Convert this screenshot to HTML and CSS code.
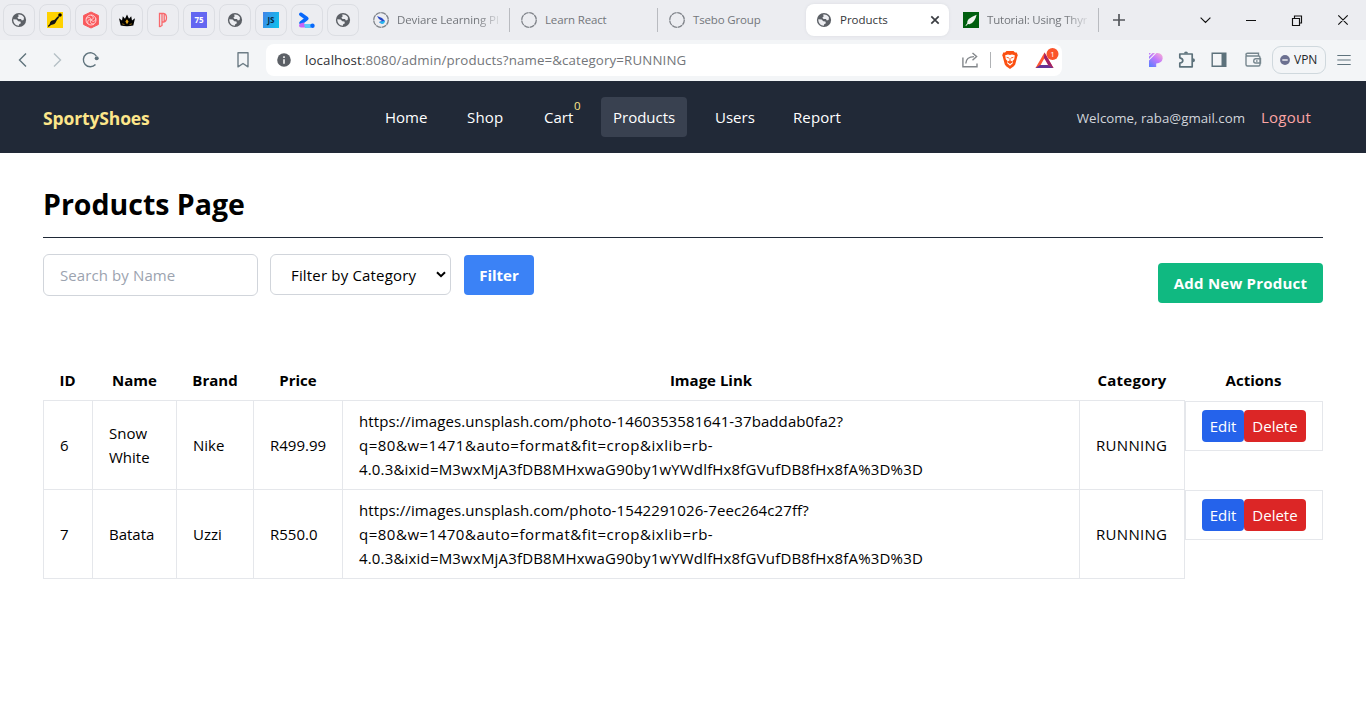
FILE: index.html
```html
<!DOCTYPE html>
<html lang="en">
<head>
<meta charset="utf-8">
<title>Products</title>
<link rel="stylesheet" href="styles.css">
</head>
<body>
<svg class="defs" aria-hidden="true">
  <symbol id="globe" viewBox="0 0 16 16"><circle cx="8" cy="8" r="7.1" fill="#5c6066"/><path d="M7.2 2.6C9.5 2.2 12 3.3 13 5.6L12.6 7.9 10.8 8.4 10 7H7.6L6.3 5.7 7.6 4.6ZM2.3 7.3 5.6 7.6 7.3 9.2 9.4 9.6 9.9 11.2 8.2 12.2 7.8 13.7C4.8 13.7 2.2 11.2 2.3 7.3Z" fill="#ecedf1"/></symbol>
  <symbol id="spinner" viewBox="0 0 16 16"><circle cx="8" cy="8" r="7.3" fill="none" stroke="#7d8187" stroke-width="1.3" stroke-dasharray="5.100 .630"/></symbol>
</svg>
<div class="browser">
  <div class="tabstrip">
    <div class="pins">
      <div class="pin"><svg width="16" height="16"><use href="#globe"/></svg></div>
      <div class="pin"><svg width="16" height="16"><path fill="#ffd200" d="M0 0h16v16H0z"/><path d="M1.200 15 1 13.800 2.600 12.200C3 9.500 4.500 8.600 6.200 8.300 8.700 7.800 9 5.500 11.300 4L12.300 5C10.800 7.300 9.800 7.800 9.200 9.500 8.600 11.500 6.800 12.800 4 12.900L2.200 14.600Z" fill="#151515"/><circle cx="13" cy="3" r="1.800"/></svg></div>
      <div class="pin"><svg width="16" height="16"><path d="M8 0 15.4 3.5V12.5L8 16 .6 12.5V3.5Z" fill="#f9595c" stroke="#f9595c" stroke-linejoin="round"/><g fill="none" stroke="#ffdadb" stroke-width=".9"><circle cx="8" cy="8" r="5"/><path d="M8 3C11 5 11 7 8 8M12.8 6.5C12 10 10 10 8 8M11 12C7.5 12 6.8 10 8 8M5 12C4 8.500 5.500 7 8 8M3.200 6.500C6.500 4.500 8 6 8 8"/></g></svg></div>
      <div class="pin"><svg width="16" height="16"><path d="M0 6.200 3 8.500 3.800 4.200 6 6.800 8 2.500 10 6.800 12.200 4.200 13 8.500 16 6.200 14.300 13.600Q8 15 1.700 13.600Z"/><path d="M8 7.200 9.600 9.600 8 12.300 6.400 9.600Z" fill="#e3a41b"/><path d="M3.200 11.800 5.500 12.600M12.800 11.800 10.500 12.600" stroke="#b37e14" stroke-width=".8"/></svg></div>
      <div class="pin"><svg width="16" height="16" fill="none" stroke="#f8696d" stroke-width="1.300"><path d="M4.500 15V1.500H8.500C12.500 2 12.500 9.500 8.500 10H7M7 1v12.500L4.500 15M9.200 2v8"/></svg></div>
      <div class="pin"><span class="score">75</span></div>
      <div class="pin"><svg width="16" height="16"><use href="#globe"/></svg></div>
      <div class="pin"><span class="js">JS</span></div>
      <div class="pin"><svg width="16" height="16"><path d="M1.800 2.300 7.800 6.500 2 11" fill="none" stroke="#0868fb" stroke-width="3.600" stroke-linecap="round" stroke-linejoin="round"/><path d="M0 13.800Q0 11 5 10.500L7 15.500H2Q0 15.500 0 13.800Z" fill="#c863f5"/><path d="M5 12H12V16H6Z" fill="#5cc9fb"/><circle cx="13.500" cy="13.700" r="2.200" fill="#0868fb"/></svg></div>
      <div class="pin"><svg width="16" height="16"><use href="#globe"/></svg></div>
    </div>
    <div class="tab deviare"><svg width="16" height="16"><use href="#spinner"/><path d="M4 4 9 6 12 9 10 11.500Q8 12 6 10L9 9Q5 7 4 4Z" fill="#2847c5"/><path d="M6 10 12 8.700Q11.500 12 9 12Z" fill="#27b9ef"/></svg><span>Deviare Learning Pl</span></div>
    <div class="tab learn"><svg width="16" height="16"><use href="#spinner"/></svg><span>Learn React</span></div>
    <div class="tab tsebo"><svg width="16" height="16"><use href="#spinner"/></svg><span>Tsebo Group</span></div>
    <div class="tab active"><svg width="16" height="16"><use href="#globe"/></svg><span>Products</span><svg width="10" height="10" class="close"><path d="M1.300 1.300 8.700 8.700M8.700 1.300 1.300 8.700" stroke="#3a3d42" stroke-width="1.700"/></svg></div>
    <div class="tab tutorial"><svg width="16" height="16"><path fill="#005f0f" d="M0 0h16v16H0z"/><path d="M2.500 13.500 4.200 11.200Q3.500 6.500 13.600 2.800 12 10.500 6.500 12.200L5 12 3 14Z" fill="#eef4ee"/></svg><span>Tutorial: Using Thyr</span></div>
    <svg class="plus" width="14" height="14"><path d="M7 1v12M1 7h12" stroke="#54575c" stroke-width="1.700"/></svg>
    <svg class="winbuttons" width="150" height="14" fill="none" stroke="#111" stroke-width="1"><path d="M.6 4.600 5.500 9.500 10.400 4.600M46 7.500h10M92.500 5.500h7v7h-7zM94.500 5.500v-2.500h7v7h-2M138.300 2.300 147.700 11.700M147.700 2.300 138.300 11.700" stroke-width="1.150"/></svg>
  </div>
  <div class="toolbar">
    <svg class="navbuttons" width="84" height="18" fill="none"><path d="M9 2.500 2.500 9 9 15.500" stroke="#5f737d" stroke-width="1.400"/><path d="M37 2.500 43.500 9 37 15.500" stroke="#b5c0c6" stroke-width="1.400"/><path d="M79.300 5A7 7 0 1 0 78.500 13.500" stroke="#5f737d" stroke-width="1.400"/><circle cx="79.700" cy="7.200" r="2" fill="#5f737d"/></svg>
    <svg class="bookmark" width="12" height="16"><path d="M1 .8h10v14L6 11.500 1 14.800Z" fill="none" stroke="#6d7d86" stroke-width="1.400" stroke-linejoin="round"/></svg>
    <div class="address">
      <svg width="14" height="14"><circle cx="7" cy="7" r="6.800" fill="#5c6066"/><path d="M7 6.300v4.500M7 3.200v1.800" stroke="#fff" stroke-width="1.500"/></svg>
      <span class="url"><b>localhost</b>:8080/admin/products?name=&amp;category=RUNNING</span>
      <svg class="share" width="17" height="16" fill="none" stroke="#83878b" stroke-width="1.400"><path d="M.9 5.500V14.800H15V11.500M3.800 11.500Q4.200 4.600 12 4.600M10.500.900 14.600 4.600 10.500 8.300"/></svg>
      <i class="sep"></i>
      <svg class="lion" width="16" height="18"><path d="M4.500 0h7L13 1.600 14.700 1.500 15.800 4.200 15.300 5.500 13.200 13.500Q12.500 15 8 18 3.500 15 2.800 13.500L.7 5.500.2 4.200 1.300 1.500 3 1.600Z" fill="#fb5012"/><path d="M3.200 4.200 6 3.500 8 4 10 3.500 12.800 4.200 12.200 8.200 10.500 10 11 12 8 14.800 5 12 5.500 10 3.800 8.200Z" fill="#fff"/><path d="M4.600 6.300 7 7M11.400 6.300 9 7M8 7v3M5.700 11 8 9.900 10.300 11 8 12.500Z" fill="#fb5012" stroke="#fb5012" stroke-width=".9"/></svg>
      <svg class="bat" width="24" height="22"><path d="M9.500 4.500 18.500 20H.5Z" fill="#ff5530"/><path d="M9.500 4.500 18.500 20 13 17 9 10Z" fill="#9d2068"/><path d="M.5 20 5 17H13L18.500 20Z" fill="#663397"/><path d="M9.300 10.500 13 17H5.600Z" fill="#fff"/><circle cx="17.500" cy="6" r="6" fill="#fb542b"/><text x="15.300" y="9" class="count">1</text></svg>
    </div>
    <svg class="perplex" width="14" height="14"><defs><linearGradient id="pg" x1="1" y1="0" x2=".2" y2="1"><stop stop-color="#ffb3d1"/><stop offset=".5" stop-color="#c279fb"/><stop offset="1" stop-color="#637eff"/></linearGradient></defs><path d="M0 7.500 7.500 0H8.500Q14 .5 13.700 5.500 13 10 7.200 10.500V14H0ZM0 0H2L0 2ZM3.500 0H6L0 6V3.500Z" fill="url(#pg)"/></svg>
    <svg class="ext" width="18" height="18" fill="none" stroke="#5c717b" stroke-width="1.700"><path d="M1.800 3H14.200V15.800H1.800V12Q4.800 11.500 4.800 9.400T1.800 6.800Z" stroke-linejoin="round"/><path d="M6 2.500Q6 .4 8 .4T10 2.500ZM14.800 7.300Q17 7.300 17 9.300T14.800 11.300Z" fill="#5c717b" stroke="none"/></svg>
    <svg class="side" width="16" height="16"><path d="M1.200 1.200H14.800V14.200H1.200Z" fill="none" stroke="#5c717b" stroke-width="1.400"/><path d="M10.500 1h4.500v13.500h-4.500z" fill="#5c717b"/></svg>
    <svg class="wallet" width="17" height="16" fill="none" stroke="#76868e" stroke-width="1.400"><path d="M1 3.800V12.500Q1 14 2.500 14H13.500Q15 14 15 12.500V5.500Q15 4 13.500 4H2.500Q1 4 1 2.500 1 1.200 2.500 1.200H13.500V4M15.500 6.800H10.500Q8.700 7 8.700 9T10.500 11H15.500ZM11 9h1.600"/></svg>
    <div class="vpn"><svg width="10" height="10"><circle cx="5" cy="5" r="4.900" fill="#6b7090"/><path d="M2.300 5h5.400" stroke="#fff" stroke-width="1.300"/></svg><span>VPN</span></div>
    <svg class="menu" width="14" height="12"><path d="M.3 1.500H13.700M.3 6H13.700M.3 10.500H13.700" stroke="#5f737d" stroke-width="1.200"/></svg>
  </div>
</div>
<header class="site">
  <a class="brand">SportyShoes</a>
  <nav>
    <a class="home">Home</a><a class="shop">Shop</a><a class="cart">Cart<sup>0</sup></a><a class="products">Products</a><a class="users">Users</a><a class="report">Report</a>
  </nav>
  <span class="welcome">Welcome, raba@gmail.com</span>
  <a class="logout">Logout</a>
</header>
<main>
  <h1>Products Page</h1>
  <div class="controls">
    <input class="search" type="text" placeholder="Search by Name">
    <div class="select"><span>Filter by Category</span><svg width="10" height="7"><path d="M1 1.200 5 5.200 9 1.200" fill="none" stroke="#000" stroke-width="2"/></svg></div>
    <button class="filter">Filter</button>
    <button class="add">Add New Product</button>
  </div>
  <table>
    <colgroup><col class="c1"><col class="c2"><col class="c3"><col class="c4"><col class="c5"><col class="c6"><col class="c7"></colgroup>
    <thead><tr><th>ID</th><th>Name</th><th>Brand</th><th>Price</th><th>Image Link</th><th>Category</th><th>Actions</th></tr></thead>
    <tbody>
      <tr><td>6</td><td>Snow White</td><td>Nike</td><td>R499.99</td><td class="link">https://images.unsplash.com/photo-1460353581641-37baddab0fa2?<br><span class="query">q=80&amp;w=1471&amp;auto=format&amp;fit=crop&amp;ixlib=rb-</span><br><span class="long">4.0.3&amp;ixid=M3wxMjA3fDB8MHxwaG90by1wYWdlfHx8fGVufDB8fHx8fA%3D%3D</span></td><td class="cat">RUNNING</td><td><div class="actions"><a class="edit">Edit</a><a class="delete">Delete</a></div></td></tr>
      <tr><td>7</td><td>Batata</td><td>Uzzi</td><td>R550.0</td><td class="link">https://images.unsplash.com/photo-1542291026-7eec264c27ff?<br><span class="query">q=80&amp;w=1470&amp;auto=format&amp;fit=crop&amp;ixlib=rb-</span><br><span class="long">4.0.3&amp;ixid=M3wxMjA3fDB8MHxwaG90by1wYWdlfHx8fGVufDB8fHx8fA%3D%3D</span></td><td class="cat">RUNNING</td><td><div class="actions"><a class="edit">Edit</a><a class="delete">Delete</a></div></td></tr>
    </tbody>
  </table>
</main>
</body>
</html>
```
FILE: styles.css
```css
* { box-sizing: border-box; }
body { margin: 0; height: 728px; overflow: hidden; background: #fff; color: #000; font: 15px/24px "Open Sans", "Noto Sans", sans-serif; }
svg { display: block; flex: none; overflow: visible; }
.defs { position: absolute; width: 0; height: 0; }

.browser { height: 81px; background: #f3f5f7; }
.tabstrip { height: 40px; display: flex; align-items: center; background: #ecedf1; }
.pins { display: flex; gap: 4px; padding-left: 3px; }
.pin { width: 32px; height: 32px; border: 1px solid #dcdee3; border-radius: 8px; display: flex; align-items: center; justify-content: center; }
.score, .js { width: 16px; height: 16px; font-size: 8px; font-weight: 700; line-height: 16px; text-align: center; }
.score { background: #6366f1; color: #fff; }
.js { background: linear-gradient(110deg, #4283e8, #0bc5ec); color: #082b43; }
.tab { display: flex; align-items: center; gap: 8px; height: 24px; font-size: 11.5px; color: #73767b; white-space: nowrap; }
.deviare { width: 137px; margin-left: 14px; border-right: 1px solid #b9bbc0; }
.learn, .tsebo { width: 148px; padding-left: 11px; }
.learn { border-right: 1px solid #b9bbc0; }
.learn span { letter-spacing: -.15px; }
.tsebo span { letter-spacing: -.15px; }
.deviare span, .tutorial span { letter-spacing: -.1px; mask-image: linear-gradient(90deg, #000 78%, rgba(0, 0, 0, .15)); }
.active { width: 143px; height: 32px; padding: 0 9px 0 10px; border-radius: 8px; background: #fff; color: #34363a; box-shadow: 0 0 3px #d9dbe0; }
.close { margin-left: auto; }
.tutorial { width: 136px; margin-left: 14px; border-right: 1px solid #b9bbc0; }
.tutorial span { letter-spacing: -.2px; }
.plus { margin-left: 13px; }
.winbuttons { margin-left: 74px; }

.toolbar { height: 40px; display: flex; align-items: center; }
.navbuttons { margin-left: 17px; }
.bookmark { margin-left: 136px; }
.address { width: 796px; height: 32px; margin-left: 17px; padding-left: 11px; border-radius: 8px; background: #fff; display: flex; align-items: center; }
.url { width: 655px; margin-left: 14px; color: #73767a; font-size: 13.3px; letter-spacing: .13px; }
.url b { color: #303236; font-weight: 400; }
.share { margin-left: 2px; }
.sep { width: 1px; height: 16px; margin-left: 11px; background: #b0b2b5; }
.lion { margin-left: 11px; }
.bat { margin: -3px 0 0 17px; }
.count { font-size: 8px; fill: #fff; }
.perplex { margin-left: 87px; }
.ext { margin-left: 15px; }
.side { margin-left: 15px; }
.wallet { margin-left: 18px; }
.vpn { width: 54px; height: 28px; margin-left: 10px; padding-left: 7px; border: 1px solid #cfd8dd; border-radius: 9px; display: flex; align-items: center; gap: 4px; font-size: 12px; color: #24262a; }
.menu { margin-left: 11px; }

.site { height: 72px; padding: 0 55px 0 43px; display: flex; align-items: center; background: #212937; color: #fff; }
.brand { width: 330px; padding-top: 1px; color: #fde68a; font-size: 17.5px; font-weight: 700; letter-spacing: -.13px; }
nav { display: flex; gap: 16px; }
nav a { height: 40px; padding: 8px 12px; border-radius: 4px; white-space: nowrap; }
.home { width: 66px; }
.shop { width: 61px; letter-spacing: .15px; }
.cart { width: 53px; position: relative; }
.cart sup { position: absolute; left: 42px; top: 0; font-size: 11.5px; line-height: 18px; color: #fde68a; }
.products { width: 86px; background: #394150; }
.users { width: 62px; }
.report { width: 72px; letter-spacing: .1px; }
.welcome { margin-left: auto; padding-top: 1px; font-size: 13.3px; color: #d1d5db; }
.logout { width: 50px; margin-left: 16px; letter-spacing: .25px; color: #fca5a5; }

main { padding: 32px 43px 0; }
h1 { height: 53px; margin: 0; border-bottom: 1px solid #1f2937; font-size: 28.5px; line-height: 38px; font-weight: 700; }
.controls { display: flex; align-items: flex-start; margin-top: 16px; height: 106px; }
.search, .select { border: 1px solid #d1d5db; border-radius: 6px; background: #fff; font: inherit; }
.search { width: 215px; height: 42px; padding: 0 16px; letter-spacing: .1px; }
.search::placeholder { color: #9ca3af; }
.select { width: 181px; height: 41px; margin-left: 12px; padding: 0 4px 0 20px; letter-spacing: .17px; display: flex; align-items: center; justify-content: space-between; white-space: nowrap; }
button { height: 40px; border: 0; padding: 0; border-radius: 4px; color: #fff; font: inherit; font-weight: 700; white-space: nowrap; }
.filter { width: 70px; margin: 1px 0 0 13px; background: #3b82f6; }
.add { width: 165px; margin: 9px 0 0 auto; letter-spacing: .22px; background: #10b981; }

table { width: 1280px; table-layout: fixed; border-collapse: separate; border-spacing: 0; }
.c1 { width: 50px; } .c2 { width: 84px; } .c3 { width: 77px; } .c4 { width: 89px; } .c5 { width: 737px; } .c6 { width: 105px; } .c7 { width: 138px; }
th { height: 41px; padding: 0 1px 1px 0; font-weight: 700; border-bottom: 1px solid #e5e7eb; }
th:last-child { border: 0; }
th:nth-child(6) { letter-spacing: .25px; }
td { height: 89px; padding: 0 0 0 16px; border: solid #e5e7eb; border-width: 0 1px 1px 0; }
td:first-child { border-left-width: 1px; }
td:last-child { padding: 0; border: 0; vertical-align: top; }
.link { letter-spacing: .1px; }
.query { letter-spacing: .51px; }
.long { letter-spacing: .175px; }
.cat { letter-spacing: .3px; }
.actions { height: 50px; padding: 8px 16px; border: 1px solid #e5e7eb; display: flex; color: #fff; }
.actions a { height: 32px; line-height: 32px; border-radius: 4px; text-align: center; }
.edit { width: 42px; background: #2563eb; }
.delete { width: 62px; background: #dc2626; }
```
